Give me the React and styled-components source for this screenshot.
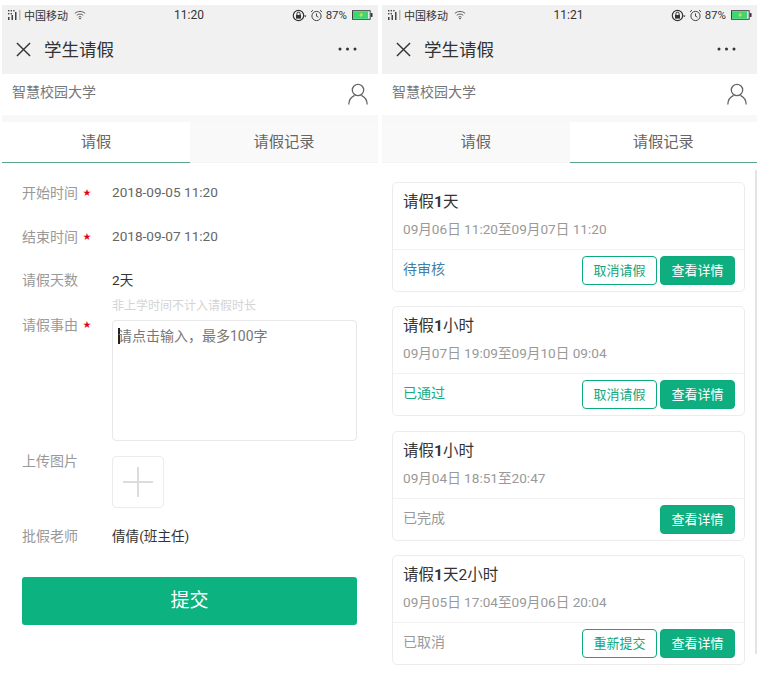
import React from 'react';
import styled, { createGlobalStyle } from 'styled-components';

const GlobalStyle = createGlobalStyle`
  html, body {
    margin: 0;
    padding: 0;
    background: #fff;
    font-family: Roboto, "Noto Sans CJK SC", sans-serif;
  }
  * { box-sizing: border-box; }
`;

const Page = styled('div')`
  display: flex;
  gap: 4px;
  width: 758px;
  height: 675px;
  padding: 5px 0 0 2px;
  overflow: hidden;
`;

const PhoneWrap = styled('div')`
  position: relative;
  width: ${(p) => p.$width}px;
`;

const TopGrey = styled('div')`
  background: #f1f1f1;
  height: 69px;
`;

const StatusBar = styled('div')`
  display: grid;
  grid-template-columns: 1fr auto 1fr;
  align-items: center;
  height: 20px;
  padding: 0 5px;
  font-size: 11px;
  color: #333;
`;

const StatusLeft = styled('div')`
  display: flex;
  align-items: center;
  gap: 1px;

  svg:last-child {
    margin-left: 5px;
  }
`;

const StatusRight = styled('div')`
  display: flex;
  align-items: center;
  justify-content: flex-end;
  gap: 3px;
  font-size: 11.5px;

  svg:last-child {
    margin-left: 2px;
  }
`;

const Clock = styled('span')`
  font-size: 12px;
  padding-right: 2px;
`;

const TitleBar = styled('div')`
  display: flex;
  align-items: center;
  height: 48px;
  padding: 0 21px 0 14px;
`;

const Title = styled('h1')`
  flex: 1;
  margin: 0 0 1px 13px;
  font-size: 17.5px;
  font-weight: 400;
  color: #333;
`;

const School = styled('div')`
  display: flex;
  align-items: center;
  justify-content: space-between;
  height: 41px;
  padding: 0 10px;
  font-size: 14px;
  color: #777;

  span {
    margin-bottom: 8px;
  }

  svg {
    margin-bottom: 2px;
  }
`;

const Tabs = styled('div')`
  display: flex;
  height: 48px;
  padding-top: 7px;
  background: #f8f8f8;
`;

const Tab = styled('div')`
  flex: 1;
  display: flex;
  align-items: center;
  justify-content: center;
  padding-bottom: 5px;
  font-size: 15.3px;
  color: #666;
  background: ${(p) => (p.$active ? '#fff' : '#f9f9f9')};
  border-bottom: 1px solid ${(p) => (p.$active ? '#5aa88a' : '#f4f4f4')};
`;

const Form = styled('div')`
  padding: 8px 21px 0 20px;
`;

const Row = styled('div')`
  display: flex;
  align-items: center;
  height: 44px;
  font-size: 14px;
  margin-top: ${(p) => p.$top || 0}px;
`;

const TopRow = styled('div')`
  display: flex;
  align-items: flex-start;
  font-size: 14px;
  margin-top: ${(p) => p.$top}px;
`;

const Label = styled('div')`
  display: flex;
  align-items: center;
  width: 90px;
  flex: none;
  line-height: 20px;
  color: #999;
  margin-top: ${(p) => p.$top || 0}px;
`;

const Star = styled('span')`
  margin-left: 5px;
  font-size: 8px;
  color: #e60012;
`;

const Value = styled('div')`
  margin-bottom: 2px;
  font-size: 13.6px;
  color: ${(p) => (p.$dark ? '#333' : '#666')};
`;

const Hint = styled('div')`
  margin: -4px 0 0 90px;
  font-size: 12px;
  line-height: 16px;
  color: #d4d4d4;
`;

const TextArea = styled('div')`
  width: 245px;
  height: 121px;
  padding: 5px 5px;
  border: 1px solid #e8e8e8;
  border-radius: 4px;
  font-size: 14px;
  line-height: 20px;
  color: #777;
`;

const Caret = styled('span')`
  display: inline-block;
  width: 2px;
  height: 16px;
  margin-right: -2px;
  vertical-align: -3px;
  background: #222;
`;

const UploadBox = styled('div')`
  display: flex;
  align-items: center;
  justify-content: center;
  width: 52px;
  height: 52px;
  border: 1px solid #ececec;
  border-radius: 4px;
`;

const Submit = styled('button')`
  display: block;
  width: 335px;
  height: 48px;
  margin-top: 19px;
  padding: 0 0 6px;
  border: none;
  border-radius: 3px;
  font-family: inherit;
  font-size: 19px;
  color: #fff;
  background: #0cb280;
`;

const List = styled('div')`
  display: flex;
  flex-direction: column;
  gap: 14.4px;
  padding: 19px 12px 0 10px;
`;

const Card = styled('div')`
  border: 1px solid #ececec;
  border-radius: 5px;
  background: #fff;
`;

const CardBody = styled('div')`
  height: 67px;
  padding: 8px 10px 0;
  border-bottom: 1px solid #f2f2f2;
`;

const CardTitle = styled('div')`
  font-size: 15.5px;
  line-height: 22px;
  color: #333;
`;

const Num = styled('b')`
  font-weight: 700;
`;

const CardDate = styled('div')`
  margin-top: 6px;
  font-size: 13.6px;
  line-height: 20px;
  color: #999;
`;

const CardFoot = styled('div')`
  display: flex;
  align-items: center;
  gap: 3px;
  height: 41px;
  padding: 0 9px 0 10px;
`;

const Status = styled('span')`
  flex: 1;
  font-size: 14px;
  margin-top: -5px;
  color: ${(p) => p.$color};
`;

const ActionButton = styled('button')`
  width: 75px;
  height: 29px;
  padding: 0 0 2px;
  border: 1px solid #0cab7c;
  border-radius: 4px;
  font-family: inherit;
  font-size: 13px;
  color: ${(p) => (p.$filled ? '#fff' : '#14a57b')};
  background: ${(p) => (p.$filled ? '#0fae80' : '#fff')};
`;

const ScrollLine = styled('div')`
  position: absolute;
  top: 165px;
  right: 0;
  width: 2px;
  height: 484px;
  background: #e4e4e4;
`;

const SignalIcon = () => (
  <svg width="16" height="12" viewBox="0 0 16 12">
    <g fill="#444">
      <rect x="1" y="1" width="1.4" height="1.4" />
      <rect x="3.6" y="1" width="1.4" height="1.4" />
      <rect x="6.2" y="1" width="1.4" height="1.4" />
      <rect x="1" y="4" width="1.4" height="1.4" />
      <rect x="3.6" y="4" width="1.4" height="1.4" />
      <rect x="1" y="8" width="1.5" height="3" />
      <rect x="4.5" y="6" width="1.5" height="5" />
      <rect x="8" y="3" width="1.5" height="8" />
    </g>
    <rect x="12" y="1" width="1.5" height="10" fill="#bbb" />
  </svg>
);

const WifiIcon = () => (
  <svg width="12" height="10" viewBox="0 0 14 11" fill="none" stroke="#555" strokeWidth="1.1">
    <path d="M1 3.6 C4.5 .6 9.5 .6 13 3.6" />
    <path d="M3.2 5.8 C5.4 4 8.6 4 10.8 5.8" />
    <path d="M5.2 8 C6.2 7.2 7.8 7.2 8.8 8" />
    <circle cx="7" cy="9.6" r=".6" fill="#555" />
  </svg>
);

const RotateLockIcon = () => (
  <svg width="15" height="13" viewBox="0 0 15 13">
    <circle cx="6.5" cy="6.5" r="5.2" fill="none" stroke="#333" strokeWidth="1.2" />
    <path d="M12 6.5 L14.5 6.5 L13.2 8.2 Z" fill="#333" />
    <rect x="4" y="6" width="5" height="3.6" fill="#333" />
    <path d="M4.9 6 V4.8 A1.6 1.6 0 0 1 8.1 4.8 V6" fill="none" stroke="#333" />
  </svg>
);

const AlarmIcon = () => (
  <svg width="13" height="13" viewBox="0 0 13 13" fill="none" stroke="#444" strokeWidth="1">
    <circle cx="6.5" cy="7" r="4.6" />
    <path d="M6.5 4.4 V7.2 L8.4 8.2" />
    <path d="M1 3 L3 1.2 M12 3 L10 1.2" />
  </svg>
);

const BatteryIcon = () => (
  <svg width="21" height="10" viewBox="0 0 22 10">
    <rect x=".5" y=".5" width="18.5" height="9" fill="#fff" stroke="#333" />
    <rect x="1" y="1" width="16" height="8" fill="#3ed675" />
    <rect x="19.5" y="3" width="2" height="4" fill="#333" />
    <path d="M10.5 1.8 L7.5 5.4 H9.5 L8.5 8.2 L11.8 4.4 H9.8 Z" fill="#e8e337" />
  </svg>
);

const CloseIcon = () => (
  <svg width="15" height="15" viewBox="0 0 16 16" stroke="#333" strokeWidth="1.5">
    <path d="M1 1 L15 15 M15 1 L1 15" />
  </svg>
);

const DotsIcon = () => (
  <svg width="19" height="4" viewBox="0 0 19 4" fill="#333">
    <circle cx="2" cy="2" r="1.5" />
    <circle cx="9.5" cy="2" r="1.5" />
    <circle cx="17" cy="2" r="1.5" />
  </svg>
);

const UserIcon = () => (
  <svg width="20" height="22" viewBox="0 0 20 22" fill="none" stroke="#666" strokeWidth="1.3">
    <circle cx="10" cy="7" r="5.7" />
    <path d="M.8 21.5 C1 16.5 4 13.6 6.6 12.4 M19.2 21.5 C19 16.5 16 13.6 13.4 12.4" />
  </svg>
);

const PlusIcon = () => (
  <svg width="30" height="30" viewBox="0 0 30 30" stroke="#dcdcdc" strokeWidth="2">
    <path d="M15 0 V30 M0 15 H30" />
  </svg>
);

function Phone({ time, tab, width, children }) {
  return (
    <PhoneWrap $width={width}>
      <TopGrey>
        <StatusBar>
          <StatusLeft>
            <SignalIcon />
            <span>中国移动</span>
            <WifiIcon />
          </StatusLeft>
          <Clock>{time}</Clock>
          <StatusRight>
            <RotateLockIcon />
            <AlarmIcon />
            <span>87%</span>
            <BatteryIcon />
          </StatusRight>
        </StatusBar>
        <TitleBar>
          <CloseIcon />
          <Title>学生请假</Title>
          <DotsIcon />
        </TitleBar>
      </TopGrey>
      <School>
        <span>智慧校园大学</span>
        <UserIcon />
      </School>
      <Tabs>
        <Tab $active={tab === 0}>请假</Tab>
        <Tab $active={tab === 1}>请假记录</Tab>
      </Tabs>
      {children}
    </PhoneWrap>
  );
}

function LeaveForm() {
  return (
    <Form>
      <Row>
        <Label>开始时间<Star>★</Star></Label>
        <Value>2018-09-05 11:20</Value>
      </Row>
      <Row>
        <Label>结束时间<Star>★</Star></Label>
        <Value>2018-09-07 11:20</Value>
      </Row>
      <Row $top={-1}>
        <Label>请假天数</Label>
        <Value $dark>2天</Value>
      </Row>
      <Hint>非上学时间不计入请假时长</Hint>
      <TopRow $top={6}>
        <Label $top={-5}>请假事由<Star>★</Star></Label>
        <TextArea><Caret />请点击输入，最多100字</TextArea>
      </TopRow>
      <TopRow $top={15}>
        <Label $top={-5}>上传图片</Label>
        <UploadBox><PlusIcon /></UploadBox>
      </TopRow>
      <Row $top={6}>
        <Label>批假老师</Label>
        <Value $dark>倩倩(班主任)</Value>
      </Row>
      <Submit>提交</Submit>
    </Form>
  );
}

const records = [
  { title: <>请假<Num>1</Num>天</>, date: '09月06日 11:20至09月07日 11:20', status: '待审核', color: '#3f7fa8', action: '取消请假' },
  { title: <>请假<Num>1</Num>小时</>, date: '09月07日 19:09至09月10日 09:04', status: '已通过', color: '#1aab80', action: '取消请假' },
  { title: <>请假<Num>1</Num>小时</>, date: '09月04日 18:51至20:47', status: '已完成', color: '#999' },
  { title: <>请假<Num>1</Num>天2小时</>, date: '09月05日 17:04至09月06日 20:04', status: '已取消', color: '#999', action: '重新提交' },
];

function LeaveRecords() {
  return (
    <List>
      {records.map((r) => (
        <Card key={r.date}>
          <CardBody>
            <CardTitle>{r.title}</CardTitle>
            <CardDate>{r.date}</CardDate>
          </CardBody>
          <CardFoot>
            <Status $color={r.color}>{r.status}</Status>
            {r.action && <ActionButton>{r.action}</ActionButton>}
            <ActionButton $filled>查看详情</ActionButton>
          </CardFoot>
        </Card>
      ))}
    </List>
  );
}

export default function App() {
  return (
    <>
      <GlobalStyle />
      <Page>
        <Phone time="11:20" tab={0} width={376}>
          <LeaveForm />
        </Phone>
        <Phone time="11:21" tab={1} width={375}>
          <LeaveRecords />
          <ScrollLine />
        </Phone>
      </Page>
    </>
  );
}
